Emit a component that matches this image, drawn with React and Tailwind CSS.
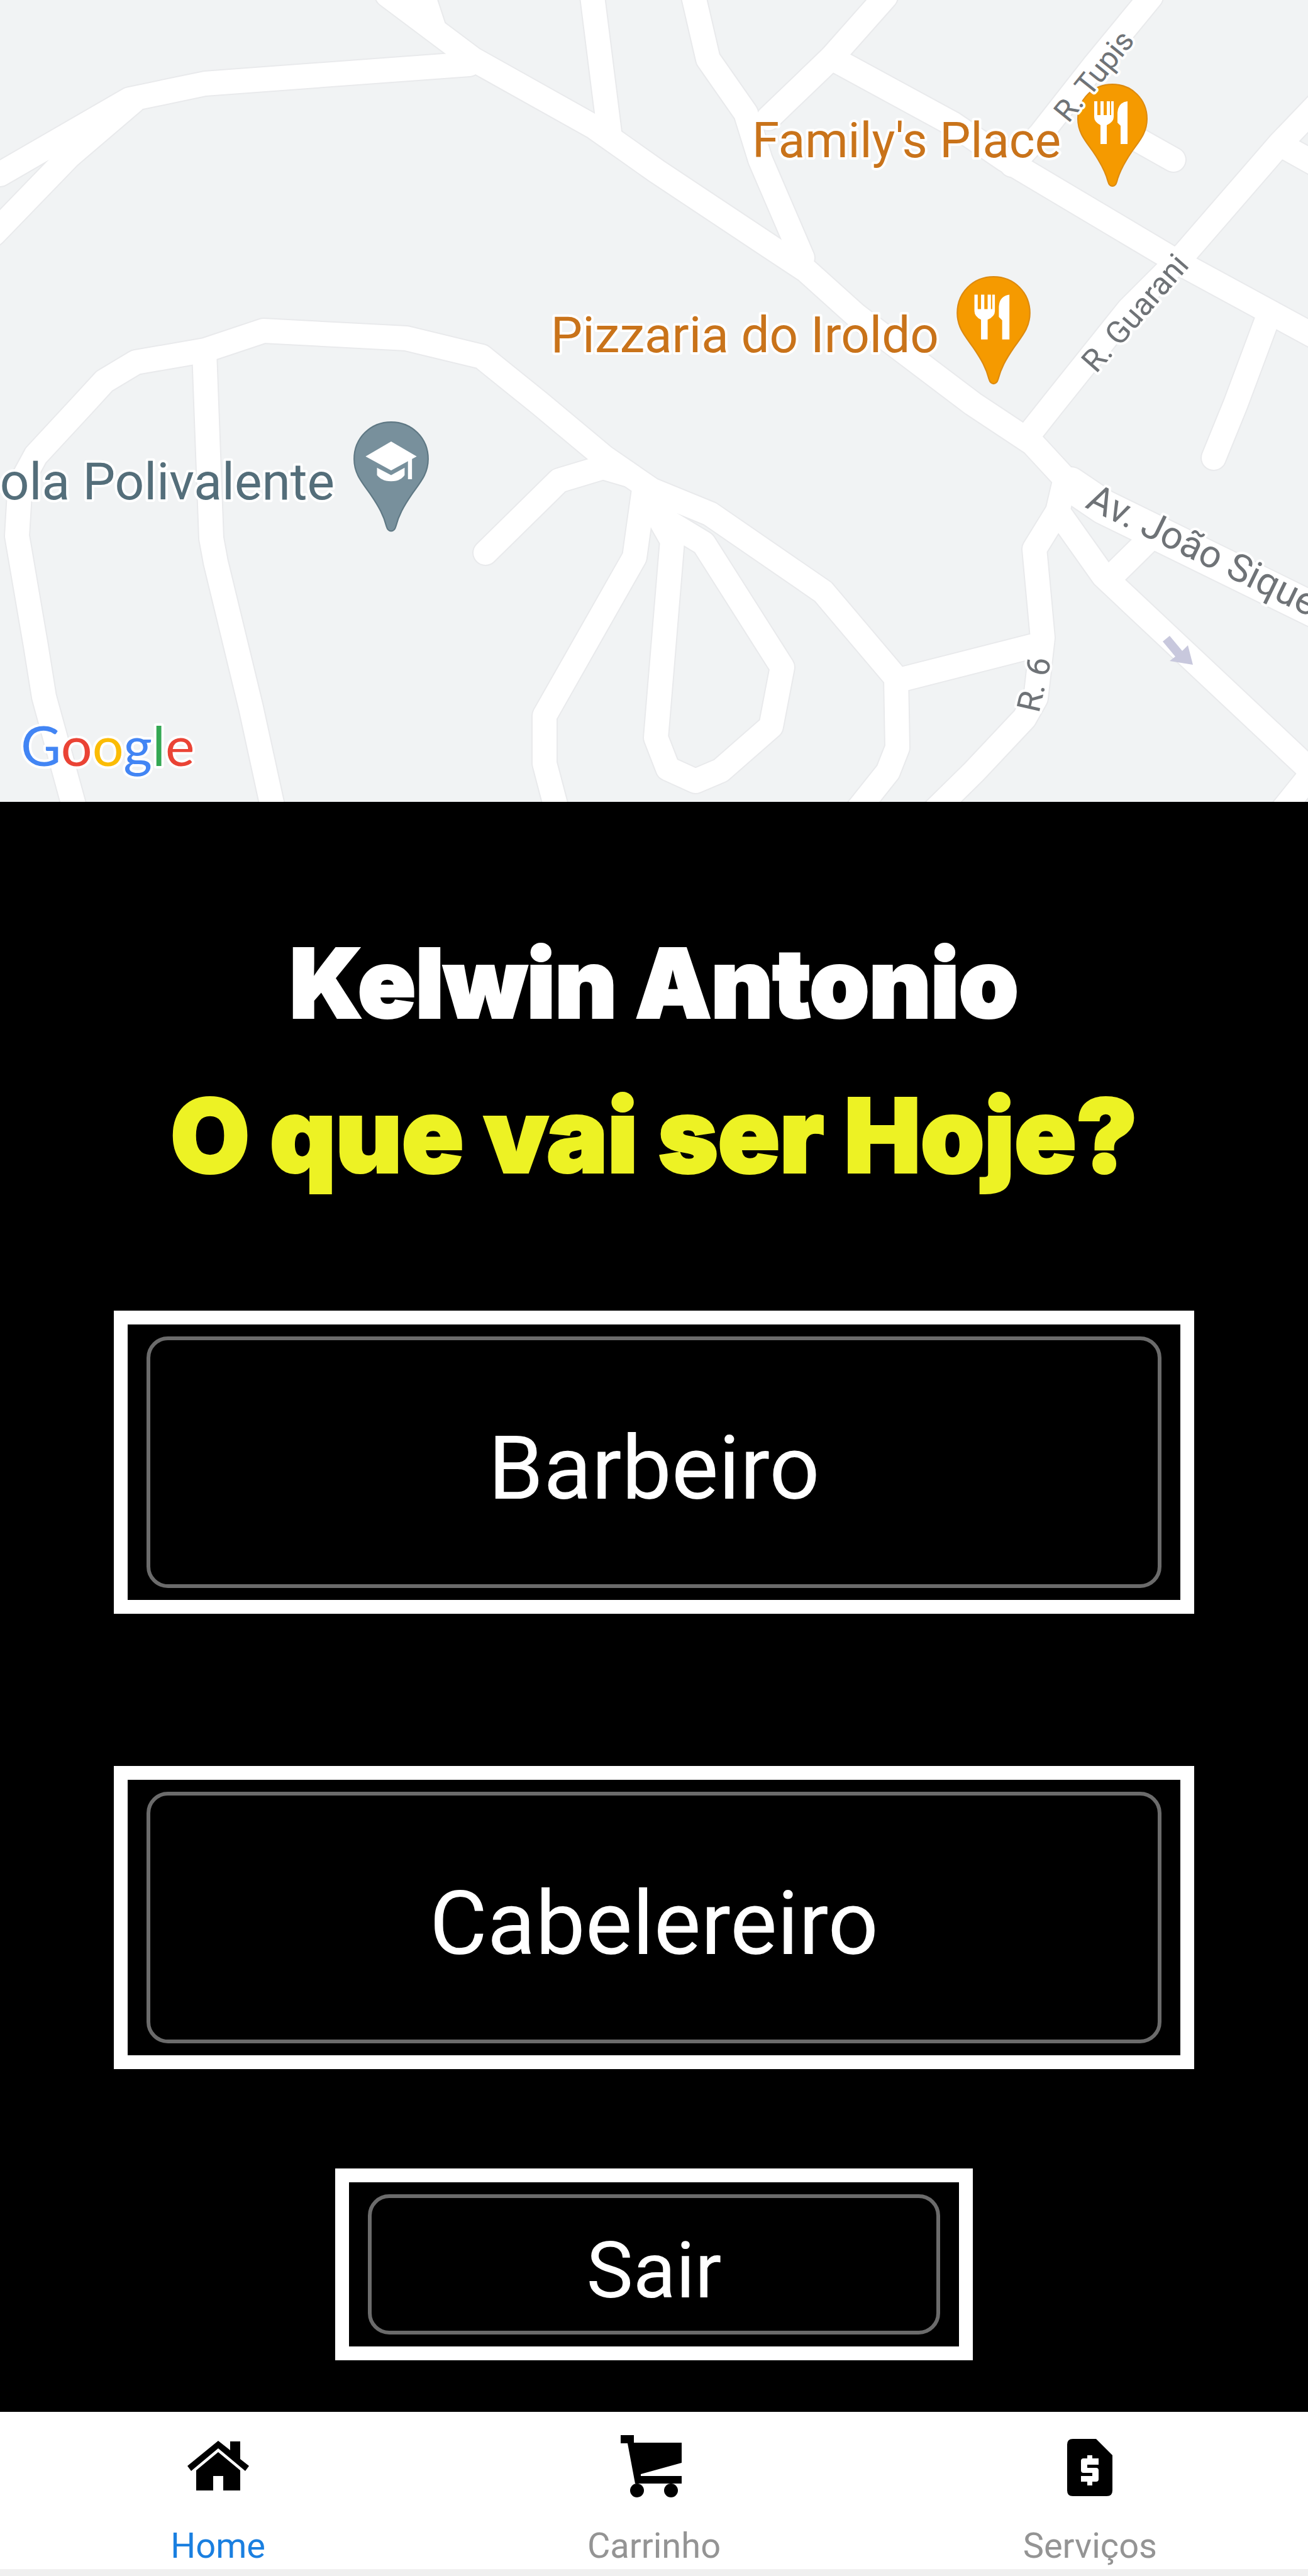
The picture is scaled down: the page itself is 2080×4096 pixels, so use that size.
const ROADS = [
  "M616 -8 L752 94 L945 202 L1044 272 L1229 395 L1282 430 L1362 502 L1547 642 L1642 705 L1702 770",
  "M672 -10 L690 45",
  "M0 277 L206 158 L326 133 L746 102",
  "M-10 372 L110 248 L213 160",
  "M942 -5 L969 210",
  "M1103 -5 L1126 94 L1186 180 L1209 254 L1276 410",
  "M1408 -5 L1322 92 L1222 188",
  "M1322 92 L1515 197 L1599 254 L1868 414 L2100 540",
  "M1770 200 L1866 254",
  "M1830 -5 L1742 102 L1655 213 L1609 262",
  "M2101 160 L2035 229 L1885 402 L1795 492 L1675 642 L1637 690",
  "M2040 232 L2101 266",
  "M2015 508 L1965 642 L1930 728",
  "M1692 770 L1682 813 L1645 873 L1658 1014 L1647 1110 L1629 1142 L1549 1227 L1485 1290",
  "M1435 1080 L1655 1024",
  "M120 1290 L70 1108 L57 1027 L27 852 L32 770 L57 724 L133 642 L166 606 L216 576 L326 557 L419 526 L646 538 L766 567 L859 642 L962 728 L1036 779 L1129 817 L1309 941 L1425 1078 L1427 1189 L1412 1227 L1354 1300",
  "M325 560 L328 642 L336 856 L343 894 L399 1125 L435 1290",
  "M772 879 L889 764 L959 743 L1000 755",
  "M1024 779 L1009 886 L866 1138 L866 1214 L886 1290",
  "M1025 780 L1063 830 L1119 864 L1244 1061 L1226 1155 L1146 1225 L1106 1242 L1062 1222 L1043 1173 L1069 860 L1035 800",
  "M1682 813 L1755 916 L2100 1240",
  "M1770 914 L1835 850",
  "M2090 1225 L2030 1300",
];

function Pin({ x, y, scale, color, edge, children }) {
  return (
    <g transform={`translate(${x} ${y}) scale(${scale})`}>
      <path
        d="M0 1C-31 1-55 25-55 56C-55 78-43 91-31 108C-18 127-11 140-7 156Q-5 163 0 163Q5 163 7 156C11 140 18 127 31 108C43 91 55 78 55 56C55 25 31 1 0 1Z"
        fill={color}
        stroke={edge}
        strokeWidth="2"
      />
      {children}
    </g>
  );
}

function Cutlery() {
  return (
    <g fill="#fff">
      <path d="M-29 28h5v22h5V28h5v22h5V28h5v22h2V28h4v25q0 8-11 13v30h-10V66q-10-5-10-13Z" />
      <path d="M24 28v68H13V67L8 62V46q1-16 16-18Z" />
    </g>
  );
}

function GradCap() {
  return (
    <g fill="#fff">
      <path d="M0 30L38 52L0 73L-38 52Z" />
      <path d="M-21 69L0 80L20 69V80Q14 89 0 89Q-14 89-21 80Z" />
      <path d="M25 58L31 55V86H25Z" />
    </g>
  );
}

function MapView() {
  const road = "fill-none [stroke-linejoin:round] [stroke-linecap:round]";
  const halo = "[paint-order:stroke] stroke-white [stroke-linejoin:round] [stroke-width:8px]";
  return (
    <svg viewBox="0 0 2080 1275" className="block w-full bg-[#f1f3f4] font-['Roboto',sans-serif]" role="img" aria-label="Mapa">
      {ROADS.map((d) => (
        <path key={"edge" + d} d={d} className={road} stroke="#e9eaec" strokeWidth="42" />
      ))}
      <path d="M1702 770 L1755 806 L2100 975" className={road} stroke="#e9eaec" strokeWidth="58" />
      {ROADS.map((d) => (
        <path key={d} d={d} className={road} stroke="#fff" strokeWidth="38" />
      ))}
      <path d="M1702 770 L1755 806 L2100 975" className={road} stroke="#fff" strokeWidth="54" />
      <path d="M1849 1020L1860 1011L1880 1035L1889 1026L1897 1057L1860 1051L1869 1044Z" fill="#c8c8dd" />

      <Pin x={1769} y={133} scale={1} color="#f59a00" edge="#dc8a10"><Cutlery /></Pin>
      <Pin x={1580} y={439} scale={1.05} color="#f59a00" edge="#dc8a10"><Cutlery /></Pin>
      <Pin x={622} y={670} scale={1.07} color="#78909c" edge="#5f7884"><GradCap /></Pin>

      <g className={halo} fontSize="80" textAnchor="end">
        <text x="1687" y="250" fontSize="78" fill="#c9731a">Family's Place</text>
        <text x="1493" y="560" fill="#c9731a">Pizzaria do Iroldo</text>
        <text x="532" y="794" fontSize="82" fill="#546e7a">cola Polivalente</text>
      </g>
      <g className={halo} fill="#6f7377">
        <text fontSize="48" transform="translate(1699 197) rotate(-51)">R. Tupis</text>
        <text fontSize="50" transform="translate(1743 595) rotate(-49)">R. Guarani</text>
        <text fontSize="52" transform="translate(1652 1135) rotate(-77)">R. 6</text>
        <text fontSize="61" transform="translate(1724 806) rotate(26)">Av. João Sique</text>
      </g>
      <text x="33" y="1218" fontSize="88" className={halo + " font-['Lato',sans-serif]"}>
        <tspan fill="#4285f4">G</tspan>
        <tspan fill="#ea4335">o</tspan>
        <tspan fill="#fbbc05">o</tspan>
        <tspan fill="#4285f4">g</tspan>
        <tspan fill="#34a853">l</tspan>
        <tspan fill="#ea4335">e</tspan>
      </text>
    </svg>
  );
}

function Framed({ children, frame, button }) {
  return (
    <div className={"border-[22px] border-white px-[30px] py-[19px] " + frame}>
      <button type="button" className={"block w-full rounded-[34px] border-[6px] border-[#6b6b6b] pt-5 text-center text-white " + button}>
        {children}
      </button>
    </div>
  );
}

function HomeIcon() {
  return (
    <svg viewBox="0 0 100 100" className="size-[100px]" fill="#000">
      <path d="M50 9L69 24V10H85V38L99 49L93 57L50 21L7 57L1 49Z" />
      <path d="M50 27L85 56V88H58V65H42V88H15V56Z" />
    </svg>
  );
}

function CartIcon() {
  return (
    <svg viewBox="0 0 100 100" className="size-[100px] overflow-visible" fill="#000">
      <path d="M-3 0H18V12H94V44L29 62V65H94V77H20L8 13H-3Z" />
      <circle cx="23" cy="88" r="11" />
      <circle cx="77" cy="88" r="11" />
    </svg>
  );
}

function BillIcon() {
  return (
    <svg viewBox="0 0 100 100" className="size-[100px]" fill="#000">
      <path d="M22 6H60L86 32V88Q86 97 77 97H23Q14 97 14 88V15Q14 6 23 6Z" />
      <path d="M46 32H54V37H64V47H46V52H60Q64 52 64 56V70Q64 74 60 74H54V80H46V74H36V65H54V60H40Q36 60 36 56V41Q36 37 40 37H46Z" fill="#fff" />
    </svg>
  );
}

const TABS = [
  { label: "Home", Icon: HomeIcon, tone: "text-[#1a7fe0]" },
  { label: "Carrinho", Icon: CartIcon, tone: "text-[#949494]" },
  { label: "Serviços", Icon: BillIcon, tone: "text-[#949494]" },
];

export default function App() {
  return (
    <div className="flex min-h-screen flex-col bg-black font-['Roboto',sans-serif]">
      <MapView />
      <main className="flex grow flex-col items-center px-[181px]">
        <h1 className="mt-[198px] text-center font-['Inter',sans-serif] text-[151px] leading-[180px] font-black whitespace-nowrap text-white [-webkit-text-stroke:4px_#fff]">
          Kelwin Antonio
        </h1>
        <h2 className="mt-[62px] text-center font-['Inter',sans-serif] text-[162px] leading-[180px] font-black whitespace-nowrap text-[#edf224] [-webkit-text-stroke:4px_#edf224]">
          O que vai ser Hoje?
        </h2>
        <Framed frame="mt-[189px] w-full" button="h-[400px] text-[141px]">Barbeiro</Framed>
        <Framed frame="mt-[242px] w-full" button="h-[400px] text-[141px]">Cabelereiro</Framed>
        <Framed frame="mt-[158px] w-[1014px] max-w-full" button="h-[223px] text-[125px]">Sair</Framed>
      </main>
      <nav className="grid h-[261px] grid-cols-3 border-b-[11px] border-[#f0f0f0] bg-white">
        {TABS.map(({ label, Icon, tone }) => (
          <a key={label} href="#" className={"flex flex-col items-center gap-11 pt-[37px] text-[56px] leading-[64px] " + tone}>
            <Icon />
            {label}
          </a>
        ))}
      </nav>
    </div>
  );
}
